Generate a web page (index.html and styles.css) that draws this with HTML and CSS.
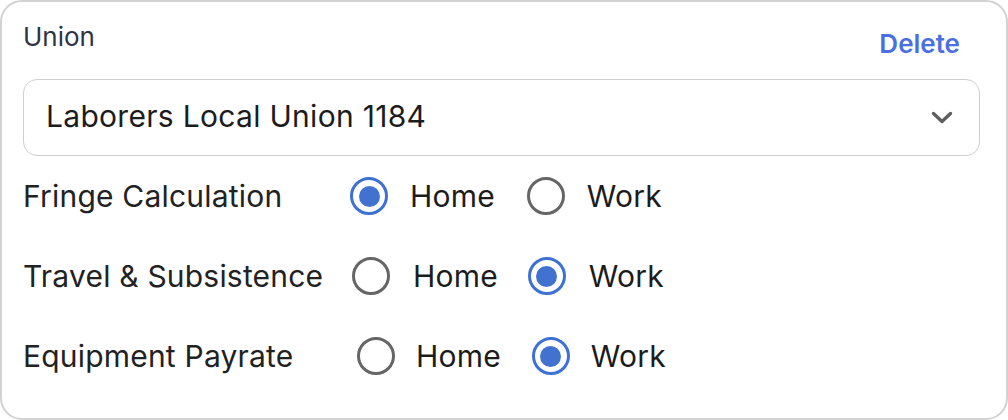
FILE: index.html
```html
<!DOCTYPE html>
<html>
<head>
<meta charset="utf-8">
<link rel="stylesheet" href="styles.css">
</head>
<body>
<div class="card">
  <div class="head">
    <span class="title">Union</span>
    <span class="delete">Delete</span>
  </div>
  <div class="select">
    <span class="select-text">Laborers Local Union 1184</span>
    <svg class="chev" width="22" height="14" viewBox="0 0 22 14"><path d="M2.5 2.5 L11 10.5 L19.5 2.5" fill="none" stroke="#5f5f5f" stroke-width="3.4" stroke-linecap="round" stroke-linejoin="round"/></svg>
  </div>
  <div class="row r1">
    <span class="label">Fringe Calculation</span>
    <span class="opt"><span class="radio on"></span><span class="opt-text">Home</span></span>
    <span class="opt"><span class="radio"></span><span class="opt-text">Work</span></span>
  </div>
  <div class="row r2">
    <span class="label">Travel &amp; Subsistence</span>
    <span class="opt"><span class="radio"></span><span class="opt-text">Home</span></span>
    <span class="opt"><span class="radio on"></span><span class="opt-text">Work</span></span>
  </div>
  <div class="row r3">
    <span class="label">Equipment Payrate</span>
    <span class="opt"><span class="radio"></span><span class="opt-text">Home</span></span>
    <span class="opt"><span class="radio on"></span><span class="opt-text">Work</span></span>
  </div>
</div>
</body>
</html>
```
FILE: styles.css
```css
html, body {
  margin: 0;
  padding: 0;
  background: #ffffff;
}
body {
  font-family: Inter, "Noto Sans", sans-serif;
}
.card {
  box-sizing: border-box;
  width: 1008px;
  height: 420px;
  border: 2px solid #d2d2d2;
  border-radius: 22px;
  padding: 0 26px 0 21px;
  background: #fff;
}
.head {
  display: flex;
  justify-content: space-between;
  align-items: flex-start;
  height: 77px;
}
.title {
  margin-top: 19px;
  font-size: 26px;
  color: #2e3445;
  line-height: 32px;
}
.delete {
  margin-top: 26px;
  margin-right: 20px;
  font-size: 26px;
  font-weight: 600;
  color: #4b6fe0;
  line-height: 32px;
}
.select {
  box-sizing: border-box;
  height: 77px;
  border: 1.5px solid #cfcfcf;
  border-radius: 14px;
  display: flex;
  align-items: center;
  justify-content: space-between;
  padding: 0 26px 3px 22px;
}
.select-text {
  font-size: 30px;
  letter-spacing: 0.3px;
  color: #1c1c1c;
}
.chev {
  margin-top: 3px;
}
.row {
  display: flex;
  align-items: center;
  height: 80px;
  letter-spacing: 0.2px;
}
.label {
  font-size: 30px;
  color: #222;
}
.r1 .label { width: 327px; }
.r2 .label { width: 329px; }
.r3 .label { width: 334px; }
.opt {
  display: flex;
  align-items: center;
}
.opt + .opt { margin-left: 32px; }
.radio {
  box-sizing: border-box;
  width: 38px;
  height: 38px;
  border-radius: 50%;
  border: 3.5px solid #666;
  display: inline-flex;
  align-items: center;
  justify-content: center;
}
.radio.on {
  border-color: #3e72d2;
}
.radio.on::after {
  content: "";
  width: 21px;
  height: 21px;
  border-radius: 50%;
  background: #4272d0;
}
.opt-text {
  margin-left: 22px;
  font-size: 30px;
  color: #1c1c1c;
}
.r2 .opt-text { margin-left: 23px; }
.r2 .opt + .opt { margin-left: 30px; }
.r3 .opt-text { margin-left: 21px; }
.r3 .opt + .opt { margin-left: 31px; }
```
